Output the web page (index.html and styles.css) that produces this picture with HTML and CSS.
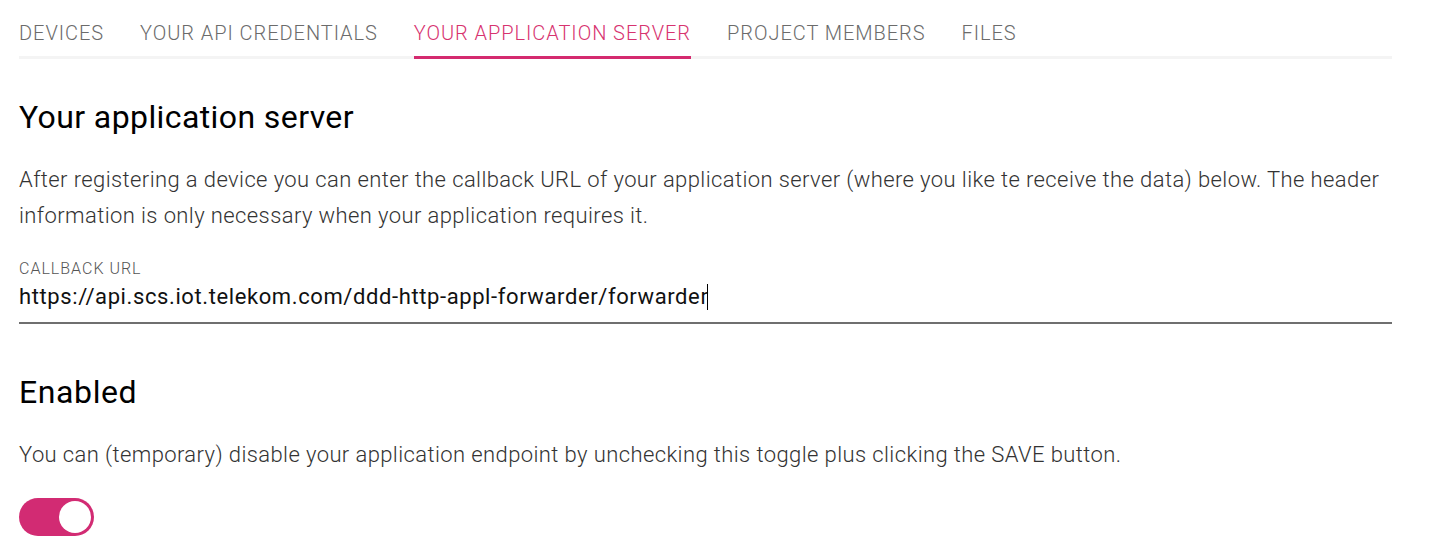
FILE: index.html
```html
<!DOCTYPE html>
<html>
<head>
<meta charset="utf-8">
<link rel="stylesheet" href="styles.css">
</head>
<body>
<div class="page">
  <nav class="tabs">
    <span class="tab">DEVICES</span>
    <span class="tab">YOUR API CREDENTIALS</span>
    <span class="tab active">YOUR APPLICATION SERVER</span>
    <span class="tab">PROJECT MEMBERS</span>
    <span class="tab">FILES</span>
  </nav>
  <h2 class="title">Your application server</h2>
  <p class="text">After registering a device you can enter the callback URL of your application server (where you like te receive the data) below. The header information is only necessary when your application requires it.</p>
  <div class="field">
    <label class="label">CALLBACK URL</label>
    <div class="input">https://api.scs.iot.telekom.com/ddd-http-appl-forwarder/forwarder<span class="caret"></span></div>
  </div>
  <h2 class="title title2">Enabled</h2>
  <p class="text text2">You can (temporary) disable your application endpoint by unchecking this toggle plus clicking the SAVE button.</p>
  <div class="toggle"><span class="knob"></span></div>
</div>
</body>
</html>
```
FILE: styles.css
```css
html, body { margin: 0; padding: 0; background: #fff; }
body { font-family: Roboto, "Liberation Sans", sans-serif; color: #000; }
.page { width: 1373px; padding-left: 19px; }
.tabs {
  display: flex; gap: 36px;
  height: 56px; border-bottom: 3px solid #f4f4f4;
  align-items: flex-end;
}
.tab {
  font-size: 20px; font-weight: 300; letter-spacing: 0.95px; color: #6b6b6b;
  line-height: 24px; padding-bottom: 11px; margin-bottom: -3px;
  border-bottom: 3px solid transparent; white-space: nowrap;
}
.tab.active { color: #d7336f; border-bottom-color: #d42a6f; }
.title { font-size: 32px; font-weight: 400; margin: 38px 0 0; line-height: 40px; letter-spacing: 0.4px; }
.title2 { margin-top: 48px; letter-spacing: 0.6px; }
.text { font-size: 22px; font-weight: 300; color: #333; line-height: 36px; margin: 25px 0 0; letter-spacing: 0.4px; }
.text2 { margin-top: 25px; }
.field { margin-top: 25px; border-bottom: 2px solid #6f6f6f; padding-bottom: 10px; }
.label { display: block; font-size: 16px; font-weight: 300; color: #555; letter-spacing: 1px; line-height: 20px; }
.input { font-size: 22px; font-weight: 400; color: #111; line-height: 30px; margin-top: 3px; letter-spacing: 0.6px; }
.caret { display: inline-block; width: 1px; height: 26px; background: #000; vertical-align: -6px; margin-left: -1px; }
.toggle {
  margin-top: 25px; width: 75px; height: 38px; border-radius: 19px; background: #d22b73;
  display: flex; justify-content: flex-end; align-items: center; padding: 0 3px; box-sizing: border-box;
}
.knob { width: 32px; height: 32px; border-radius: 50%; background: #fff; }
```
